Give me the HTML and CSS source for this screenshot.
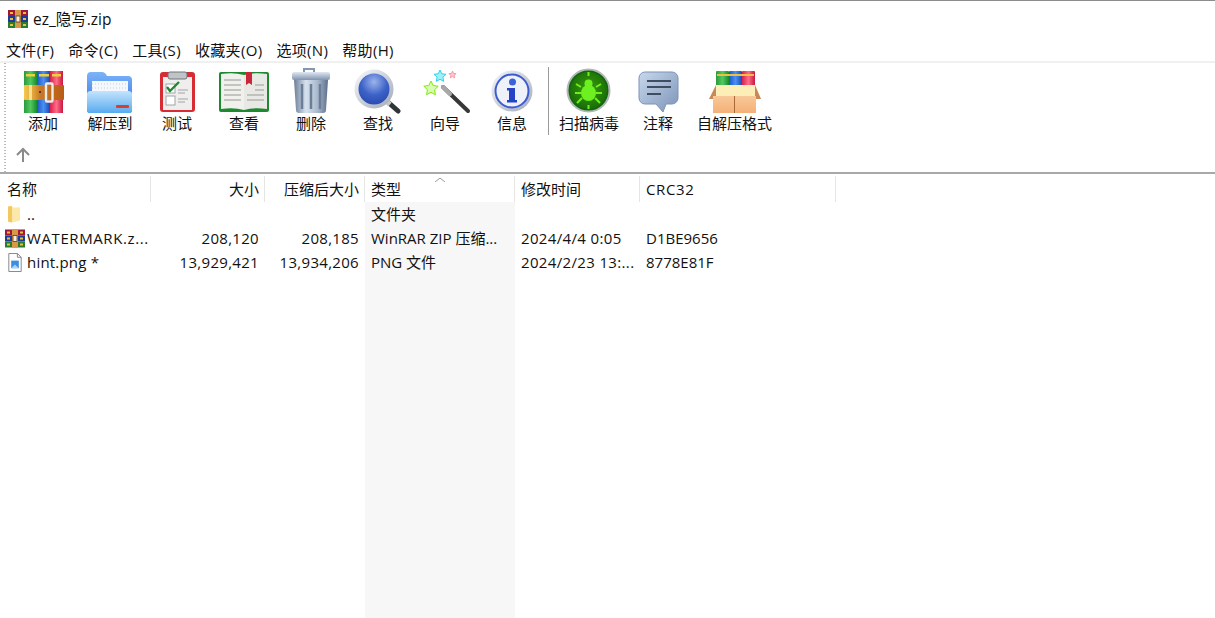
FILE: index.html
```html
<!DOCTYPE html>
<html lang="zh">
<head>
<meta charset="utf-8">
<title>ez_隐写.zip</title>
<link rel="stylesheet" href="styles.css">
</head>
<body>
<svg class="defs" width="0" height="0" aria-hidden="true">
  <defs>
    <linearGradient id="gGreen" x1="0" x2="1" y1="0" y2="0"><stop offset="0" stop-color="#2a9a3c"/><stop offset=".5" stop-color="#52c860"/><stop offset="1" stop-color="#178a2c"/></linearGradient>
    <linearGradient id="gBlue" x1="0" x2="1" y1="0" y2="0"><stop offset="0" stop-color="#1f55c8"/><stop offset=".5" stop-color="#4a90f0"/><stop offset="1" stop-color="#1a48b8"/></linearGradient>
    <linearGradient id="gRed" x1="0" x2="1" y1="0" y2="0"><stop offset="0" stop-color="#d8204a"/><stop offset=".5" stop-color="#ff6c86"/><stop offset="1" stop-color="#c81840"/></linearGradient>
    <linearGradient id="gBelt" x1="0" x2="1" y1="0" y2="0"><stop offset="0" stop-color="#f4c850"/><stop offset=".25" stop-color="#e0a038"/><stop offset=".4" stop-color="#c87a28"/><stop offset="1" stop-color="#b85c14"/></linearGradient>
    <linearGradient id="gFolderBack" x1="0" x2="0" y1="0" y2="1"><stop offset="0" stop-color="#7cb4f8"/><stop offset="1" stop-color="#2a68e0"/></linearGradient>
    <linearGradient id="gFolderFront" x1="0" x2="0" y1="0" y2="1"><stop offset="0" stop-color="#c4e4fc"/><stop offset="1" stop-color="#58aaf0"/></linearGradient>
    <linearGradient id="gMetal" x1="0" x2="1" y1="0" y2="0"><stop offset="0" stop-color="#6c7f98"/><stop offset=".35" stop-color="#d8e2ee"/><stop offset=".7" stop-color="#a8b8cc"/><stop offset="1" stop-color="#5c6e88"/></linearGradient>
    <linearGradient id="gLid" x1="0" x2="0" y1="0" y2="1"><stop offset="0" stop-color="#dfe8f2"/><stop offset="1" stop-color="#8094ae"/></linearGradient>
    <radialGradient id="gLens" cx=".5" cy=".3" r=".75"><stop offset="0" stop-color="#9cb4ec"/><stop offset=".5" stop-color="#3c62c8"/><stop offset="1" stop-color="#2444a8"/></radialGradient>
    <linearGradient id="gRing" x1="0" x2="1" y1="0" y2="1"><stop offset="0" stop-color="#f4f6fa"/><stop offset="1" stop-color="#a4acb8"/></linearGradient>
    <radialGradient id="gBug" cx=".5" cy=".45" r=".6"><stop offset="0" stop-color="#3c9c10"/><stop offset="1" stop-color="#166a04"/></radialGradient>
    <linearGradient id="gBubble" x1="0" x2="1" y1="0" y2="1"><stop offset="0" stop-color="#c8d8ec"/><stop offset="1" stop-color="#7c94b8"/></linearGradient>
    <linearGradient id="gBox" x1="0" x2="0" y1="0" y2="1"><stop offset="0" stop-color="#f8c898"/><stop offset="1" stop-color="#f4b078"/></linearGradient>
  </defs>
</svg>

<header class="titlebar">
  <svg class="rar-small" viewBox="0 0 20 18">
    <rect width="20" height="6" fill="#a01838"/><rect x="2" y="2" width="3" height="2" fill="#e8c040"/><rect x="15" y="2" width="3" height="2" fill="#e8c040"/>
    <rect y="6" width="20" height="6" fill="#1c3c98"/><rect x="2" y="8" width="3" height="2" fill="#e8c040"/><rect x="15" y="8" width="3" height="2" fill="#e8c040"/>
    <rect y="12" width="20" height="6" fill="#2a7a34"/><rect x="2" y="14" width="3" height="2" fill="#e8c040"/><rect x="15" y="14" width="3" height="2" fill="#e8c040"/>
    <rect x="7" width="6" height="18" fill="#d89848"/><rect x="8" y="6" width="4" height="6" fill="#f4f0e0" stroke="#5a3a18" stroke-width=".8"/>
  </svg>
  <span>ez_隐写.zip</span>
</header>

<nav class="menubar">
  <span>文件(F)</span><span>命令(C)</span><span>工具(S)</span><span>收藏夹(O)</span><span>选项(N)</span><span>帮助(H)</span>
</nav>

<section class="toolbar">
  <div class="tools">
    <div class="tool">
      <svg class="tool-icon" viewBox="10 67 66 47">
        <rect x="24" y="71" width="13" height="42" fill="url(#gGreen)"/>
        <rect x="37" y="71" width="13" height="42" fill="url(#gBlue)"/>
        <rect x="50" y="71" width="13" height="42" fill="url(#gRed)"/>
        <rect x="26" y="74" width="9" height="2.5" fill="#ecd040"/><rect x="39" y="74" width="10" height="2.5" fill="#ecd040"/><rect x="52" y="74" width="9" height="2.5" fill="#ecd040"/>
        <rect x="24" y="85" width="40" height="15" rx="1" fill="url(#gBelt)"/>
        <rect x="29" y="85" width="3" height="15" fill="#f8e090"/>
        <rect x="46" y="83.5" width="6.500" height="18" rx="1" fill="none" stroke="#ecece4" stroke-width="2.400"/>
        <circle cx="40" cy="92" r="1" fill="#402008"/>
      </svg>
      <span>添加</span>
    </div>
    <div class="tool">
      <svg class="tool-icon" viewBox="77 67 66 47">
        <path d="M87 76a4 4 0 0 1 4-4h11q3 0 5 4h21a4 4 0 0 1 4 4v30a3 3 0 0 1-3 3H90a3 3 0 0 1-3-3z" fill="url(#gFolderBack)"/>
        <rect x="92" y="81" width="36" height="12" fill="#f4f8fc"/>
        <path d="M92 84h36M92 88h36" stroke="#c8d0dc" stroke-width="1" stroke-dasharray="1 2"/>
        <path d="M87 94q0-3 4-3h37q4 0 4 3v16a3 3 0 0 1-3 3H90a3 3 0 0 1-3-3z" fill="url(#gFolderFront)"/>
        <rect x="116" y="105" width="13" height="3" rx="1" fill="#d8402c"/>
      </svg>
      <span>解压到</span>
    </div>
    <div class="tool">
      <svg class="tool-icon" viewBox="144 67 66 47">
        <rect x="160" y="72" width="35" height="40" rx="3" fill="#d82c34"/>
        <rect x="163" y="77" width="29" height="33" fill="#f0eeec"/>
        <rect x="168" y="72" width="19" height="7" rx="2" fill="#c0c4c8" stroke="#707478"/>
        <rect x="166" y="84" width="9" height="9" fill="#fff" stroke="#a0a4a8"/>
        <rect x="166" y="96" width="9" height="9" fill="#fff" stroke="#a0a4a8"/>
        <path d="M167 87l3 4 9-9" fill="none" stroke="#1c8a30" stroke-width="2.4"/>
        <path d="M178 90h10M178 93h7M178 99h10M178 102h7" stroke="#a0a4a8"/>
      </svg>
      <span>测试</span>
    </div>
    <div class="tool">
      <svg class="tool-icon" viewBox="211 67 66 47">
        <rect x="219" y="72" width="50" height="40" rx="2" fill="#1e8a30"/>
        <path d="M221 74q13-2 23 1v35q-10-3-23-1z" fill="#f0f0ec"/>
        <path d="M267 74q-13-2-23 1v35q10-3 23-1z" fill="#e8e8e4"/>
        <path d="M224 80h17M224 85h17M224 90h17M224 95h17M224 100h17M255 85h9M255 90h9M247 95h17M247 100h17" stroke="#b4b4b0" stroke-width="1.5"/>
        <path d="M246 72h6v13l-3-2-3 2z" fill="#c82838"/>
      </svg>
      <span>查看</span>
    </div>
    <div class="tool">
      <svg class="tool-icon" viewBox="278 67 66 47">
        <path d="M304 73v-4h10v4" fill="none" stroke="#8498b0" stroke-width="2"/>
        <rect x="292" y="72" width="38" height="8" rx="2" fill="url(#gLid)"/>
        <path d="M294 80h34l-2 30q0 3-3 3h-24q-3 0-3-3z" fill="url(#gMetal)"/>
        <path d="M302 84v25M311 84v25M320 84v25" stroke="#6c7f98" stroke-width="2.5"/>
      </svg>
      <span>删除</span>
    </div>
    <div class="tool">
      <svg class="tool-icon" viewBox="345 67 66 47">
        <path d="M389 103l9 8" stroke="#303438" stroke-width="5" stroke-linecap="round"/>
        <path d="M386 101l4 3.500" stroke="#c4c8cc" stroke-width="5"/>
        <circle cx="374" cy="89" r="17.500" fill="url(#gLens)" stroke="url(#gRing)" stroke-width="4"/>
      </svg>
      <span>查找</span>
    </div>
    <div class="tool">
      <svg class="tool-icon" viewBox="412 67 66 47">
        <path d="M443 87l25 24" stroke="#383838" stroke-width="4" stroke-linecap="round"/>
        <path d="M443 87l7 7" stroke="#a8a8a8" stroke-width="4" stroke-linecap="round"/>
        <path d="M440 70l1.800 3.800 4.200.5-3.100 2.900.8 4.100-3.700-2-3.700 2 .8-4.100-3.100-2.900 4.200-.5z" fill="#a0f0f8" stroke="#30d0e8"/>
        <path d="M452.500 71l1 2.400 2.600.2-2 1.700.6 2.600-2.200-1.400-2.200 1.400.6-2.600-2-1.700 2.600-.2z" fill="#ffc8d0" stroke="#f89aa8"/>
        <path d="M431 81l2.200 4.500 5 .7-3.600 3.500.8 5-4.400-2.400-4.400 2.400.8-5-3.600-3.500 5-.7z" fill="#d8fcb0" stroke="#80e810"/>
      </svg>
      <span>向导</span>
    </div>
    <div class="tool">
      <svg class="tool-icon" viewBox="478 67 66 47">
        <circle cx="511" cy="91" r="20.500" fill="url(#gRing)"/>
        <circle cx="511" cy="91" r="16.500" fill="#eef1f8" stroke="#3c5cd0" stroke-width="2"/>
        <circle cx="511.500" cy="82" r="3.500" fill="#3c62d8"/>
        <path d="M506 88h8v12h2v2.500h-10V100h2v-9.500h-2z" fill="#2444c8"/>
      </svg>
      <span>信息</span>
    </div>
    <div class="tool-sep"></div>
    <div class="tool tool-scan">
      <svg class="tool-icon" viewBox="556 67 66 47">
        <circle cx="588.500" cy="90.500" r="21" fill="#161" stroke="#b4b8b4" stroke-width="2"/>
        <circle cx="588.500" cy="90.500" r="18.500" fill="url(#gBug)"/>
        <ellipse cx="588.500" cy="93" rx="7.500" ry="8" fill="#6cf020"/>
        <circle cx="588.500" cy="83.500" r="4" fill="#6cf020"/>
        <path d="M581 87l-5-3M581 93h-6M582 98l-5 5M596 87l5-3M596 93h6M595 98l5 5M588.500 72v4M588.500 105v4" stroke="#6cf020" stroke-width="2"/>
      </svg>
      <span>扫描病毒</span>
    </div>
    <div class="tool tool-note">
      <svg class="tool-icon" viewBox="625 67 66 47">
        <path d="M645 72h27a6 6 0 0 1 6 6v20a6 6 0 0 1-6 6h-6l-3 8-7-8h-11a6 6 0 0 1-6-6V78a6 6 0 0 1 6-6z" fill="url(#gBubble)" stroke="#7c94b8"/>
        <path d="M647 81h24M647 87h24M647 94h14" stroke="#404c60" stroke-width="2"/>
      </svg>
      <span>注释</span>
    </div>
    <div class="tool tool-sfx">
      <svg class="tool-icon" viewBox="695 67 80 47">
        <rect x="716" y="71" width="13" height="16" rx="1" fill="url(#gGreen)"/>
        <rect x="729" y="71" width="13" height="16" rx="1" fill="url(#gBlue)"/>
        <rect x="742" y="71" width="13" height="16" rx="1" fill="url(#gRed)"/>
        <rect x="717" y="74" width="37" height="2" fill="#ecc040"/>
        <path d="M716 85h39l6 14h-52z" fill="#fdeeb8"/>
        <path d="M709 99l7-14v14zM761 99l-6-14v14z" fill="#c88858"/>
        <rect x="713" y="96" width="43" height="17" fill="url(#gBox)"/>
        <path d="M734.500 96v17" stroke="#a86838"/>
      </svg>
      <span>自解压格式</span>
    </div>
  </div>
  <div class="pathbar">
    <svg class="up-arrow" viewBox="0 0 16 16"><path d="M8 15V2M2 8l6-6 6 6" fill="none" stroke="#8a8a8a" stroke-width="2"/></svg>
  </div>
</section>

<main class="list">
  <div class="row head">
    <div class="cell name-head">名称</div>
    <div class="cell num">大小</div>
    <div class="cell num">压缩后大小</div>
    <div class="cell sorted">类型<svg class="sort" viewBox="0 0 10 5"><path d="M0 5l5-4 5 4" fill="none" stroke="#9a9a9a"/></svg></div>
    <div class="cell">修改时间</div>
    <div class="cell latin-wide">CRC32</div>
    <div class="head-rest"></div>
  </div>
  <div class="row">
    <div class="cell name">
      <svg class="file-icon" viewBox="0 0 20 18"><path d="M3 1l4-.5 1 1.500h7v13l-8 2-4-1z" fill="#fce8a8"/><path d="M3 1l4-.5V17l-4-1z" fill="#f4c860"/></svg>
      <span>..</span>
    </div>
    <div class="cell num"></div><div class="cell num"></div>
    <div class="cell type">文件夹</div><div class="cell"></div><div class="cell"></div><div></div>
  </div>
  <div class="row">
    <div class="cell name">
      <svg class="file-icon" viewBox="0 0 20 18">
        <rect width="20" height="6" fill="#a01838"/><rect x="2" y="2" width="3" height="2" fill="#e8c040"/><rect x="15" y="2" width="3" height="2" fill="#e8c040"/>
        <rect y="6" width="20" height="6" fill="#1c3c98"/><rect x="2" y="8" width="3" height="2" fill="#e8c040"/><rect x="15" y="8" width="3" height="2" fill="#e8c040"/>
        <rect y="12" width="20" height="6" fill="#2a7a34"/><rect x="2" y="14" width="3" height="2" fill="#e8c040"/><rect x="15" y="14" width="3" height="2" fill="#e8c040"/>
        <rect x="7" width="6" height="18" fill="#d89848"/><rect x="8" y="6" width="4" height="6" fill="#f4f0e0" stroke="#5a3a18" stroke-width=".8"/>
      </svg>
      <span class="wide-name">WATERMARK.z...</span>
    </div>
    <div class="cell num value">208,120</div><div class="cell num value">208,185</div>
    <div class="cell type">WinRAR ZIP 压缩...</div><div class="cell date">2024/4/4 0:05</div><div class="cell">D1BE9656</div><div></div>
  </div>
  <div class="row">
    <div class="cell name">
      <svg class="file-icon" viewBox="0 0 20 20">
        <path d="M3.500 .5h9l4 4v15h-13z" fill="#fff" stroke="#808488"/><path d="M12.500 .5v4h4" fill="none" stroke="#808488"/>
        <rect x="6" y="8" width="8" height="8" fill="#3c8ce0"/><path d="M6 16l4-4 4 4z" fill="#a8d4f8"/>
      </svg>
      <span class="hint-name">hint.png *</span>
    </div>
    <div class="cell num value">13,929,421</div><div class="cell num value">13,934,206</div>
    <div class="cell type">PNG 文件</div><div class="cell date">2024/2/23 13:...</div><div class="cell">8778E81F</div><div></div>
  </div>
  <div class="row filler">
    <div></div><div></div><div></div><div class="type"></div><div></div><div></div><div></div>
  </div>
</main>
</body>
</html>
```

FILE: styles.css
```css
* { box-sizing: border-box; }

html, body { height: 100%; }

body {
  margin: 0;
  display: flex;
  flex-direction: column;
  overflow: hidden;
  background: #fff;
  color: #111;
  font: 15px/20px "Open Sans", "Noto Sans CJK SC", sans-serif;
  border-top: 1px solid #8c8c8c;
}

.defs { position: absolute; }

.titlebar {
  height: 37px;
  display: flex;
  align-items: center;
  gap: 5px;
  padding: 0 0 2px 8px;
  font-size: 15.5px;
}

.rar-small { width: 20px; height: 18px; }

.menubar {
  height: 25px;
  display: flex;
  align-items: center;
  gap: 14px;
  padding: 0 0 0 6px;
  border-bottom: 2px solid #f0f0f0;
  letter-spacing: .33px;
}

.toolbar {
  height: 111px;
  border-bottom: 2px solid #a8a8a8;
  display: flex;
  flex-direction: column;
  background-image: radial-gradient(circle, #bbb 40%, transparent 45%);
  background-size: 2px 3px;
  background-repeat: repeat-y;
  background-position: 4px 2px;
}

.tools {
  display: flex;
  align-items: flex-start;
  padding: 4px 0 0 9.5px;
  height: 74px;
}

.tool {
  width: 67px;
  flex: none;
  display: flex;
  flex-direction: column;
  align-items: center;
  line-height: 18px;
  font-size: 15px;
}

.tool-icon { width: 66px; height: 47px; flex: none; }

.tool-sep {
  width: 1px;
  height: 68px;
  margin: 0 6px 0 2.500px;
  background: #9a9a9a;
  flex: none;
}

.tool-scan { width: 68px; }
.tool-note { width: 70px; }
.tool-sfx { width: 83px; }
.tool-sfx .tool-icon { width: 80px; }

.pathbar { padding: 10px 0 0 15px; }

.up-arrow { display: block; width: 16px; height: 16px; }

.list {
  flex: 1;
  min-height: 0;
  display: grid;
  grid-template-columns: 151px 114px 100px 150px 125px 196px 1fr;
  grid-template-rows: 28px 24px 24px 24px 1fr;
}

.row { display: contents; }

.cell {
  padding: 0 6px;
  white-space: nowrap;
  overflow: hidden;
  display: flex;
  align-items: center;
}

.num { justify-content: flex-end; }

.value { letter-spacing: .3px; }
.date { letter-spacing: .35px; }
.wide-name { letter-spacing: .6px; }
.hint-name { letter-spacing: .2px; }
.latin-wide { letter-spacing: .6px; }

.head .cell {
  position: relative;
  border-right: 1px solid #e5e5e5;
  margin: 2px 0 0;
}

.head .num { padding-right: 5px; }

.name-head { padding-left: 7px; }

.name { padding: 0 0 0 5px; gap: 2px; }

.file-icon { width: 20px; height: 19px; flex: none; }

.type { background: #f7f7f7; }

.sort {
  position: absolute;
  left: 70px;
  top: 1px;
  width: 10px;
  height: 5px;
}

.filler > div { min-height: 0; }
```
